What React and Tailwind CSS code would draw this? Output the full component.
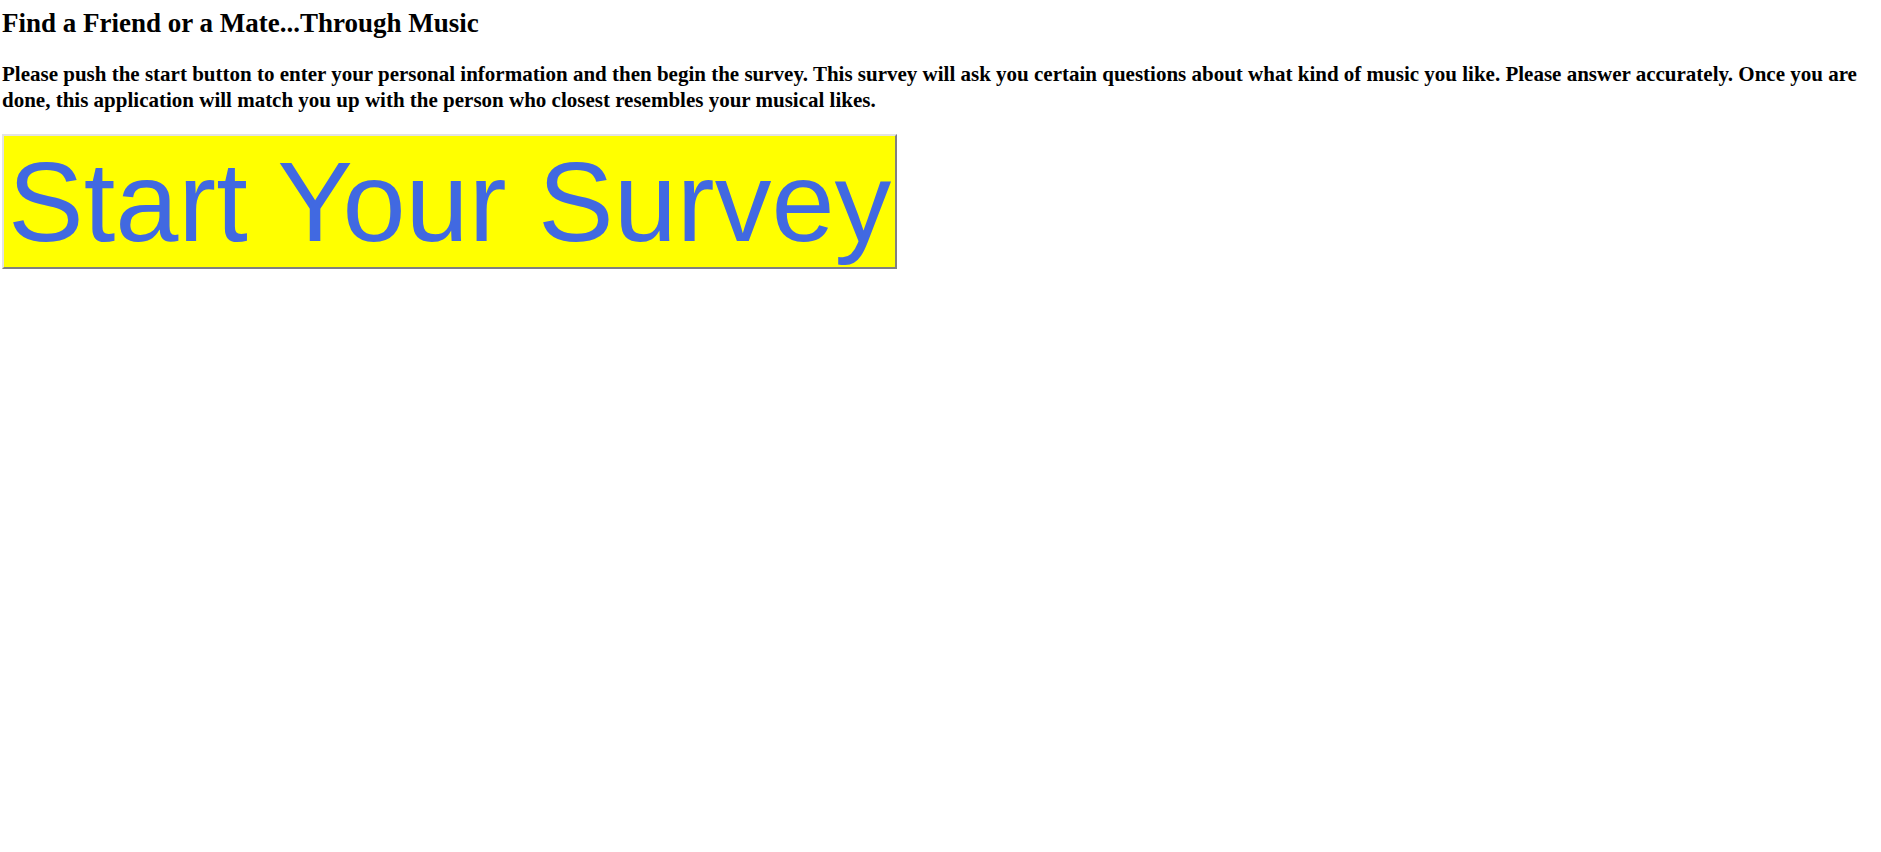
export default function App() {
  return (
    <div className="min-h-screen bg-white pl-[2px] pt-[8px]" style={{ fontFamily: '"Liberation Serif", "Times New Roman", serif' }}>
      <h2 className="text-[27px] font-bold leading-[31px] text-black">Find a Friend or a Mate...Through Music</h2>
      <h4 className="mt-[22px] text-[21px] font-bold leading-[26px] text-black">
        Please push the start button to enter your personal information and then begin the survey. This survey will ask you certain questions about what kind of music you like. Please answer accurately. Once you are done, this application will match you up with the person who closest resembles your musical likes.
      </h4>
      <button
        type="button"
        className="mt-[21px] border-2 border-t-[#e3e3e3] border-l-[#e3e3e3] border-b-[#808080] border-r-[#808080] bg-[#ffff00] px-[4px] py-[1px] text-[113.5px] leading-[129px] text-[#4169e1]"
        style={{ fontFamily: '"Liberation Sans", Arial, sans-serif' }}
      >
        Start Your Survey
      </button>
    </div>
  );
}
